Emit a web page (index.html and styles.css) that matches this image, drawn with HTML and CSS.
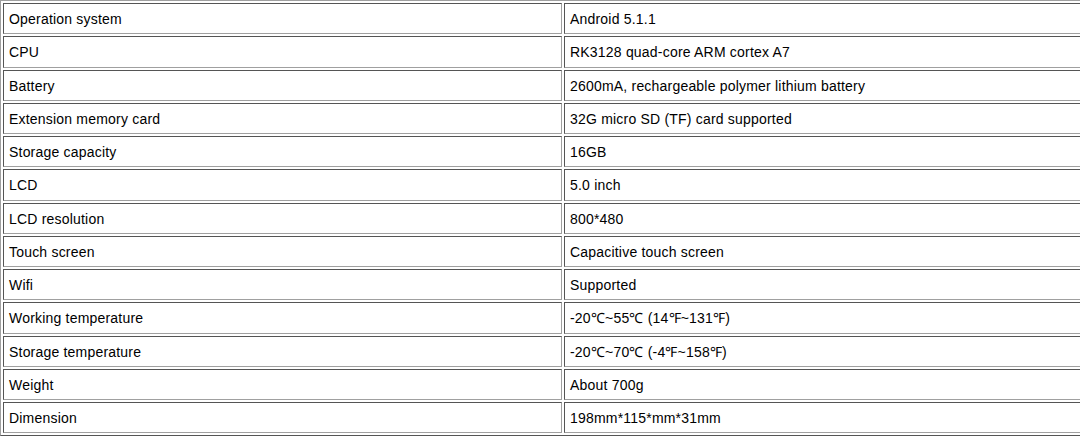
FILE: index.html
```html
<!DOCTYPE html>
<html>
<head>
<meta charset="utf-8">
<link rel="stylesheet" href="styles.css">
</head>
<body>
<table class="spec">
<tbody>
<tr><td>Operation system</td><td>Android 5.1.1</td></tr>
<tr><td>CPU</td><td>RK3128 quad-core ARM cortex A7</td></tr>
<tr><td>Battery</td><td>2600mA, rechargeable polymer lithium battery</td></tr>
<tr><td>Extension memory card</td><td>32G micro SD (TF) card supported</td></tr>
<tr><td>Storage capacity</td><td>16GB</td></tr>
<tr><td>LCD</td><td>5.0 inch</td></tr>
<tr><td>LCD resolution</td><td>800*480</td></tr>
<tr><td>Touch screen</td><td>Capacitive touch screen</td></tr>
<tr><td>Wifi</td><td>Supported</td></tr>
<tr><td>Working temperature</td><td>-20℃~55℃ (14℉~131℉)</td></tr>
<tr><td>Storage temperature</td><td>-20℃~70℃ (-4℉~158℉)</td></tr>
<tr><td>Weight</td><td>About 700g</td></tr>
<tr><td>Dimension</td><td>198mm*115*mm*31mm</td></tr>
</tbody>
</table>
</body>
</html>
```
FILE: styles.css
```css
html, body {
  margin: 0;
  padding: 0;
  background: #fff;
}
body {
  font-family: "Liberation Sans", Arial, sans-serif;
  font-size: 14px;
  letter-spacing: 0.2px;
  color: #000;
  overflow: hidden;
}
.spec {
  width: 1126px;
  border-collapse: separate;
  border-spacing: 2px;
  border-style: solid;
  border-width: 1px;
  border-color: #a0a0a0 #555 #555 #a0a0a0;
  table-layout: fixed;
}
.spec td {
  width: 50%;
  height: 31.25px;
  box-sizing: border-box;
  padding: 1px 5px 0;
  border-style: solid;
  border-width: 1px;
  border-color: #555 #a0a0a0 #a0a0a0 #555;
  vertical-align: middle;
  line-height: 16px;
  white-space: nowrap;
}
```
